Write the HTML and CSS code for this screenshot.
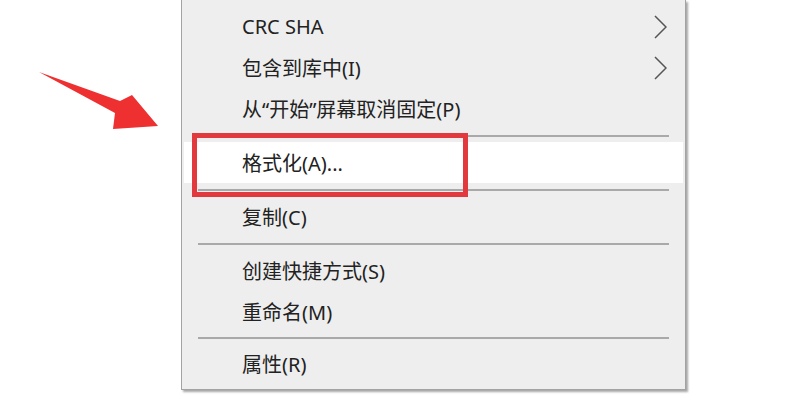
FILE: index.html
```html
<!DOCTYPE html>
<html lang="zh-CN">
<head>
    <meta charset="UTF-8">
    <title>右键菜单</title>
    <link rel="stylesheet" href="styles.css">
</head>
<body>
    <div class="page">
        <!-- red pointer arrow -->
        <svg class="arrow" width="200" height="160" viewBox="0 0 200 160">
            <polygon points="39,72 120,101 132,95 158,126 113,129 115,113" fill="#ee3030"/>
        </svg>

        <div class="menu">
            <div class="item">
                <span>CRC SHA</span>
                <svg class="chev" width="13" height="24" viewBox="0 0 13 24"><polyline points="1,1 12,12 1,23"/></svg>
            </div>
            <div class="item">
                <span>包含到库中(I)</span>
                <svg class="chev" width="13" height="24" viewBox="0 0 13 24"><polyline points="1,1 12,12 1,23"/></svg>
            </div>
            <div class="item"><span>从“开始”屏幕取消固定(P)</span></div>
            <div class="sep"></div>
            <div class="item active"><span>格式化(A)...</span></div>
            <div class="sep"></div>
            <div class="item"><span>复制(C)</span></div>
            <div class="sep"></div>
            <div class="item"><span>创建快捷方式(S)</span></div>
            <div class="item"><span>重命名(M)</span></div>
            <div class="sep tight"></div>
            <div class="item"><span>属性(R)</span></div>
        </div>
    </div>
</body>
</html>
```

FILE: styles.css
```css
html, body {
    margin: 0;
    height: 100%;
}
body {
    background-color: #fff;
    font-family: "Noto Sans", "Noto Sans CJK SC", sans-serif;
    overflow: hidden;
}
.page {
    position: relative;
    padding-left: 181px;
}
.arrow {
    position: absolute;
    left: 0;
    top: 0;
}
.menu {
    width: 503px;
    background-color: #eeeeee;
    border: 1px solid #a3a3a3;
    border-top: none;
    box-shadow: 2px 2px 2px rgba(0, 0, 0, 0.35);
    padding: 6px 0 5px;
}
.item {
    position: relative;
    height: 41px;
    display: flex;
    align-items: center;
    padding: 0 18px 0 60px;
    font-size: 20px;
    color: #222;
}
.chev {
    margin-left: auto;
}
.chev polyline {
    fill: none;
    stroke: #555;
    stroke-width: 1.5;
}
.item.active {
    background-color: #fff;
    margin: 0 2px;
    padding-left: 58px;
}
/* red annotation frame over the selected row */
.item.active::after {
    content: "";
    position: absolute;
    left: 8px;
    top: -9px;
    width: 276px;
    height: 64px;
    border: 5px solid #e2393e;
    box-sizing: border-box;
}
.sep {
    height: 13px;
    display: flex;
    align-items: center;
    padding: 0 16px;
}
.sep.tight {
    height: 11px;
}
.sep::before {
    content: "";
    flex: 1;
    height: 2px;
    background-color: #a9a9a9;
}
```
